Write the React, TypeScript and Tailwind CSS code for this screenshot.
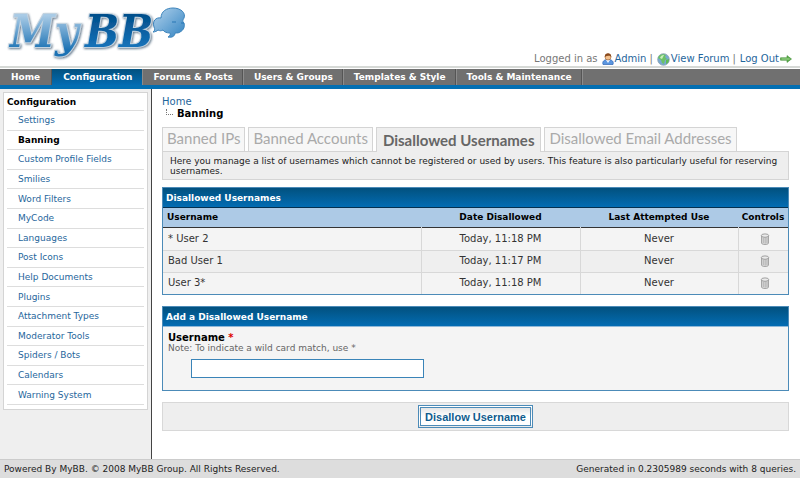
import React from "react";

const menu = ["Home", "Configuration", "Forums & Posts", "Users & Groups", "Templates & Style", "Tools & Maintenance"];

const sections = [
  "Settings",
  "Banning",
  "Custom Profile Fields",
  "Smilies",
  "Word Filters",
  "MyCode",
  "Languages",
  "Post Icons",
  "Help Documents",
  "Plugins",
  "Attachment Types",
  "Moderator Tools",
  "Spiders / Bots",
  "Calendars",
  "Warning System",
];

const tabs = ["Banned IPs", "Banned Accounts", "Disallowed Usernames", "Disallowed Email Addresses"];

const users = [
  { name: "* User 2", date: "Today, 11:18 PM", last: "Never" },
  { name: "Bad User 1", date: "Today, 11:17 PM", last: "Never" },
  { name: "User 3*", date: "Today, 11:18 PM", last: "Never" },
];

function Logo() {
  return (
    <svg width="190" height="62" viewBox="0 0 190 62" role="img" aria-label="MyBB">
      <defs>
        <linearGradient id="light" x1="0" y1="0" x2="0" y2="1">
          <stop offset="0.2" stopColor="#a9cbe6" />
          <stop offset="0.85" stopColor="#1c72b4" />
        </linearGradient>
        <linearGradient id="dark" x1="0" y1="0" x2="0" y2="1">
          <stop offset="0.2" stopColor="#02508c" />
          <stop offset="0.8" stopColor="#1673ba" />
        </linearGradient>
        <linearGradient id="bubble" x1="0" y1="0" x2="1" y2="1">
          <stop offset="0" stopColor="#b4d3ec" />
          <stop offset="1" stopColor="#3384c2" />
        </linearGradient>
        <filter id="shade" x="-10%" y="-10%" width="130%" height="130%">
          <feDropShadow dx="1" dy="1" stdDeviation="1" floodColor="#20405c" floodOpacity="0.7" />
        </filter>
      </defs>
      <g
        fontFamily="'DejaVu Serif Condensed', 'DejaVu Serif', serif"
        fontWeight="bold"
        fontStyle="italic"
        fontSize="45"
        stroke="#c3d3e0"
        strokeWidth="2"
        paintOrder="stroke"
        filter="url(#shade)"
      >
        <text x="10" y="47" fill="url(#light)">M</text>
        <text x="55" y="47" fill="url(#light)">y</text>
        <text x="85" y="47" fill="url(#dark)">B</text>
        <text x="119" y="47" fill="url(#dark)">B</text>
      </g>
      <path
        d="M153 32c2-1 2-3 1-5c-2-6 2-10 7-9c0-7 6-10 12-10c8 0 13 5 11 10c-1 2-2 3 0 5c1 3 0 7-4 9c-1 1-3 1-5 1c0 3-3 5-7 4c2-1 3-3 2-4c-3 0-6-1-7-3c-2 1-3 1-5 0c-1 1-3 2-5 2z"
        fill="url(#bubble)"
        stroke="#3b83bb"
        strokeWidth="1"
      />
      <path d="M172 22h4M181 23h3" stroke="#2777b5" strokeWidth="1" />
    </svg>
  );
}

function UserIcon() {
  return (
    <svg width="12" height="12" viewBox="0 0 12 12" aria-hidden="true">
      <path d="M1 11.500c-1-3 1-5 5-5s6 2 5 5z" fill="#5b96e0" stroke="#2f66b5" strokeWidth=".7" />
      <path d="M4 7l2 3 2-3z" fill="#eef5ff" />
      <circle cx="6" cy="4" r="3" fill="#f3c08d" stroke="#a0622e" strokeWidth=".6" />
      <path d="M2.800 4c-.5-5 7-5 6.400 0c-1-1.600-4-1.500-6.400 0z" fill="#8a4a1d" />
    </svg>
  );
}

function GlobeIcon() {
  return (
    <svg width="13" height="13" viewBox="0 0 13 13" aria-hidden="true">
      <circle cx="6.500" cy="6.500" r="5.800" fill="#78a9d2" stroke="#8aa0ac" strokeWidth=".8" />
      <path d="M2 3c2-2 5-2 7-1l-1 2 2 2-2 1-1 4-2-1-1-3-3-2z" fill="#6cc266" />
      <path d="M9 7l3-1c0 3-1 4-3 5z" fill="#5dbb55" />
      <path d="M3 5c1-3 3-3 4-3l-2 4z" fill="#c9efbc" />
    </svg>
  );
}

function ArrowIcon() {
  return (
    <svg width="12" height="8" viewBox="0 0 12 8" aria-hidden="true">
      <path d="M.5 2.800h6.500v-2.200l4.500 3.400-4.500 3.400v-2.200h-6.500z" fill="#5fb04d" stroke="#3f8c35" strokeWidth=".6" />
      <path d="M1.500 4h8" stroke="#b5e2a4" strokeWidth=".8" />
    </svg>
  );
}

function TrashIcon() {
  return (
    <svg width="10" height="12" viewBox="0 0 10 12" aria-hidden="true">
      <path d="M1.500 3v7c0 2 7 2 7 0v-7z" fill="#d8d8d8" stroke="#959595" strokeWidth=".8" />
      <path d="M3.300 5v5M5.200 5v5.500M7 5v5" stroke="#a5a5a5" strokeWidth=".7" />
      <ellipse cx="5" cy="2.600" rx="3.700" ry="1.700" fill="#eaeaea" stroke="#8c8c8c" strokeWidth=".8" />
    </svg>
  );
}

const barClass =
  "flex h-5 items-center border-b bg-linear-to-b from-[#02517f] to-[#036cb3] px-[3px] text-[9px] font-bold text-white";

function menuClass(item: string) {
  if (item === "Configuration") {
    return "flex items-center bg-linear-to-b from-[#02517f] to-[#036cb3] pr-[10px] pl-[11px]";
  }
  if (item === "Home") {
    return "flex items-center border-r border-[#555] px-[11px]";
  }
  return "flex items-center border-r border-l border-r-[#555] border-l-[#8c8c8c] pr-[9px] pl-[10px]";
}

export default function App() {
  return (
    <div className="flex min-h-screen flex-col bg-white font-['DejaVu_Sans',Verdana,sans-serif] text-[10px] leading-3 text-[#333]">
      <header className="flex h-[66px] items-end justify-between">
        <a href="#" className="mb-1 block">
          <Logo />
        </a>
        <div className="flex h-[14px] items-center pr-2 text-[#777]">
          <span className="mr-1">Logged in as</span>
          <a href="#" className="flex items-center gap-px text-[#1f669c]">
            <UserIcon />
            Admin
          </a>
          <span className="mr-1 ml-[3px]">|</span>
          <a href="#" className="flex items-center gap-px text-[#1f669c]">
            <GlobeIcon />
            View Forum
          </a>
          <span className="mr-1 ml-[3px]">|</span>
          <a href="#" className="flex items-center gap-px text-[#1f669c]">
            Log Out
            <ArrowIcon />
          </a>
        </div>
      </header>

      <nav className="border-t-2 border-[#d6d9d6] pt-px">
        <div className="flex h-5 border-b-4 border-[#036fb2] bg-[#707070] text-[9px] font-bold text-white">
          {menu.map((item) => (
            <a key={item} href="#" className={menuClass(item)}>
              {item}
            </a>
          ))}
          <span className="border-l border-[#8c8c8c]" />
        </div>
      </nav>

      <div className="flex flex-1">
        <aside className="w-[152px] shrink-0 border-r border-[#444] bg-[#efefef] px-[3px] pt-[3px]">
          <div className="border border-[#d4d4d4] bg-white px-[3px] pb-1 text-[9px]">
            <h2 className="flex h-[18px] items-center border-b border-[#ddd] font-bold text-black">Configuration</h2>
            <ul className="grid h-[294px] auto-rows-fr">
              {sections.map((item) => (
                <li key={item} className="flex items-center border-b border-[#ddd] pl-[11px]">
                  <a href="#" className={item === "Banning" ? "font-bold text-black" : "text-[#1f669c]"}>
                    {item}
                  </a>
                </li>
              ))}
            </ul>
          </div>
        </aside>

        <main className="min-w-0 flex-1 pt-[7px] pr-[11px] pb-7 pl-[10px]">
          <div>
            <a href="#" className="block text-[#1f669c]">
              Home
            </a>
            <div className="flex h-3 items-center gap-1 pl-1 font-bold text-black">
              <span className="mb-1 h-[6px] w-[7px] border-b border-l border-dotted border-[#777]" />
              Banning
            </div>
          </div>

          <div className="mt-[7px] flex h-6 items-stretch gap-[3px] font-['Lato',sans-serif] text-[15px] whitespace-nowrap">
            {tabs.map((tab) => (
              <a
                key={tab}
                href="#"
                className={
                  tab === "Disallowed Usernames"
                    ? "z-10 -mb-px flex items-center border border-b-0 border-[#d4d4d4] bg-[#eee] px-[6px] font-bold text-[#666]"
                    : "flex items-center border border-b-0 border-[#d4d4d4] bg-[#f7f7f7] px-1 pb-1 text-[#aaa]"
                }
              >
                {tab}
              </a>
            ))}
          </div>
          <p className="border border-[#d4d4d4] bg-[#eee] px-[7px] pt-1 pb-[3px] text-[9px] leading-[10px] text-[#222]">
            Here you manage a list of usernames which cannot be registered or used by users. This feature is also
            particularly useful for reserving usernames.
          </p>

          <section className="mt-[7px] border border-[#4c8bb8]">
            <h2 className={barClass + " border-[#05304f]"}>Disallowed Usernames</h2>
            <table className="w-full table-fixed border-collapse">
              <thead>
                <tr className="h-[19px] border-b border-[#333] bg-[#adcae6] text-[9px] text-black">
                  <th className="px-1 text-left">Username</th>
                  <th className="w-[159px]">Date Disallowed</th>
                  <th className="w-[158px]">Last Attempted Use</th>
                  <th className="w-[50px]">Controls</th>
                </tr>
              </thead>
              <tbody>
                {users.map((user) => (
                  <tr
                    key={user.name}
                    className="h-[22px] border-b border-[#d8d8d8] bg-[#f4f4f4] text-center first:h-[23px] last:border-b-0 even:bg-[#efefef]"
                  >
                    <td className="border-r border-[#d8d8d8] px-[5px] text-left">{user.name}</td>
                    <td className="border-r border-[#d8d8d8]">{user.date}</td>
                    <td className="border-r border-[#d8d8d8]">{user.last}</td>
                    <td>
                      <button type="button" aria-label={"Delete " + user.name} className="block w-full pl-1">
                        <span className="flex justify-center">
                          <TrashIcon />
                        </span>
                      </button>
                    </td>
                  </tr>
                ))}
              </tbody>
            </table>
          </section>

          <form>
            <section className="mt-[11px] border border-[#4c8bb8] bg-[#f4f4f4]">
              <h2 className={barClass + " border-[#8fb8d8]"}>Add a Disallowed Username</h2>
              <div className="px-[5px] pt-[5px] pb-3">
                <label htmlFor="username" className="block text-[10px] leading-[11px] font-bold text-black">
                  Username <span className="text-[#d00]">*</span>
                </label>
                <p className="text-[9px] leading-[10px] text-[#666]">Note: To indicate a wild card match, use *</p>
                <input
                  id="username"
                  type="text"
                  className="mt-[6px] ml-[23px] block h-[19px] w-[233px] appearance-none border border-[#3a84b8] bg-white px-1 outline-none"
                />
              </div>
            </section>

            <div className="mt-[11px] flex h-[29px] items-center justify-center border border-[#d8d8d8] bg-[#eee]">
              <button
                type="submit"
                className="h-[23px] border-3 border-double border-[#4c8bb8] bg-linear-to-b from-[#e6e6e6] to-white to-50% px-1 font-['Liberation_Sans',Arial,sans-serif] text-[11px] font-bold text-[#0f5c8e]"
              >
                Disallow Username
              </button>
            </div>
          </form>
        </main>
      </div>

      <footer className="flex h-[19px] items-center justify-between border-t border-[#ccc] bg-[#ddd] px-1 text-[9px] text-[#222]">
        <span>Powered By MyBB. © 2008 MyBB Group. All Rights Reserved.</span>
        <span>Generated in 0.2305989 seconds with 8 queries.</span>
      </footer>
    </div>
  );
}
